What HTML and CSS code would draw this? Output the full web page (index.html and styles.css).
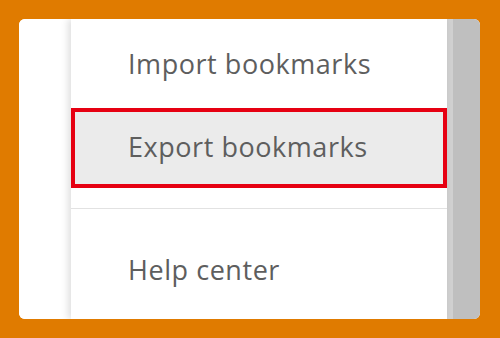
FILE: index.html
```html
<!DOCTYPE html>
<html>
<head>
<meta charset="utf-8">
<link rel="stylesheet" href="styles.css">
</head>
<body>
<div class="frame">
  <div class="card">
    <div class="gutter"></div>
    <div class="panel">
      <div class="item item-import">Import bookmarks</div>
      <div class="item item-export">Export bookmarks</div>
      <div class="spacer"></div>
      <div class="divider"></div>
      <div class="item item-help">Help center</div>
    </div>
    <div class="scrollbar"></div>
  </div>
</div>
</body>
</html>
```

FILE: styles.css
```css
html, body {
  margin: 0;
  padding: 0;
  background: #e07b00;
}
.frame {
  width: 500px;
  height: 338px;
  box-sizing: border-box;
  padding: 19px 20px 19px 19px;
}
.card {
  display: flex;
  height: 300px;
  background: #ffffff;
  border-radius: 6px;
  overflow: hidden;
}
.gutter {
  width: 52px;
  background: #ffffff;
}
.panel {
  flex: 1;
  background: #ffffff;
  box-shadow: -3px 0 7px rgba(0, 0, 0, 0.13);
  position: relative;
  z-index: 1;
  font-family: "Open Sans", "Noto Sans", sans-serif;
  font-size: 27px;
  line-height: 36px;
  letter-spacing: 0.55px;
  color: #5e5e5e;
}
.item {
  white-space: nowrap;
}
.item-import {
  padding: 27px 0 26px 57px;
}
.item-export {
  border: 4px solid #e60012;
  background: #ebebeb;
  padding: 17px 0 19px 53px;
}
.spacer {
  height: 20px;
}
.divider {
  height: 1px;
  background: #e2e2e2;
}
.item-help {
  padding: 43px 0 0 57px;
}
.scrollbar {
  width: 27px;
  border-left: 6px solid #d0d0d0;
  background: #bfbfbf;
}
```
